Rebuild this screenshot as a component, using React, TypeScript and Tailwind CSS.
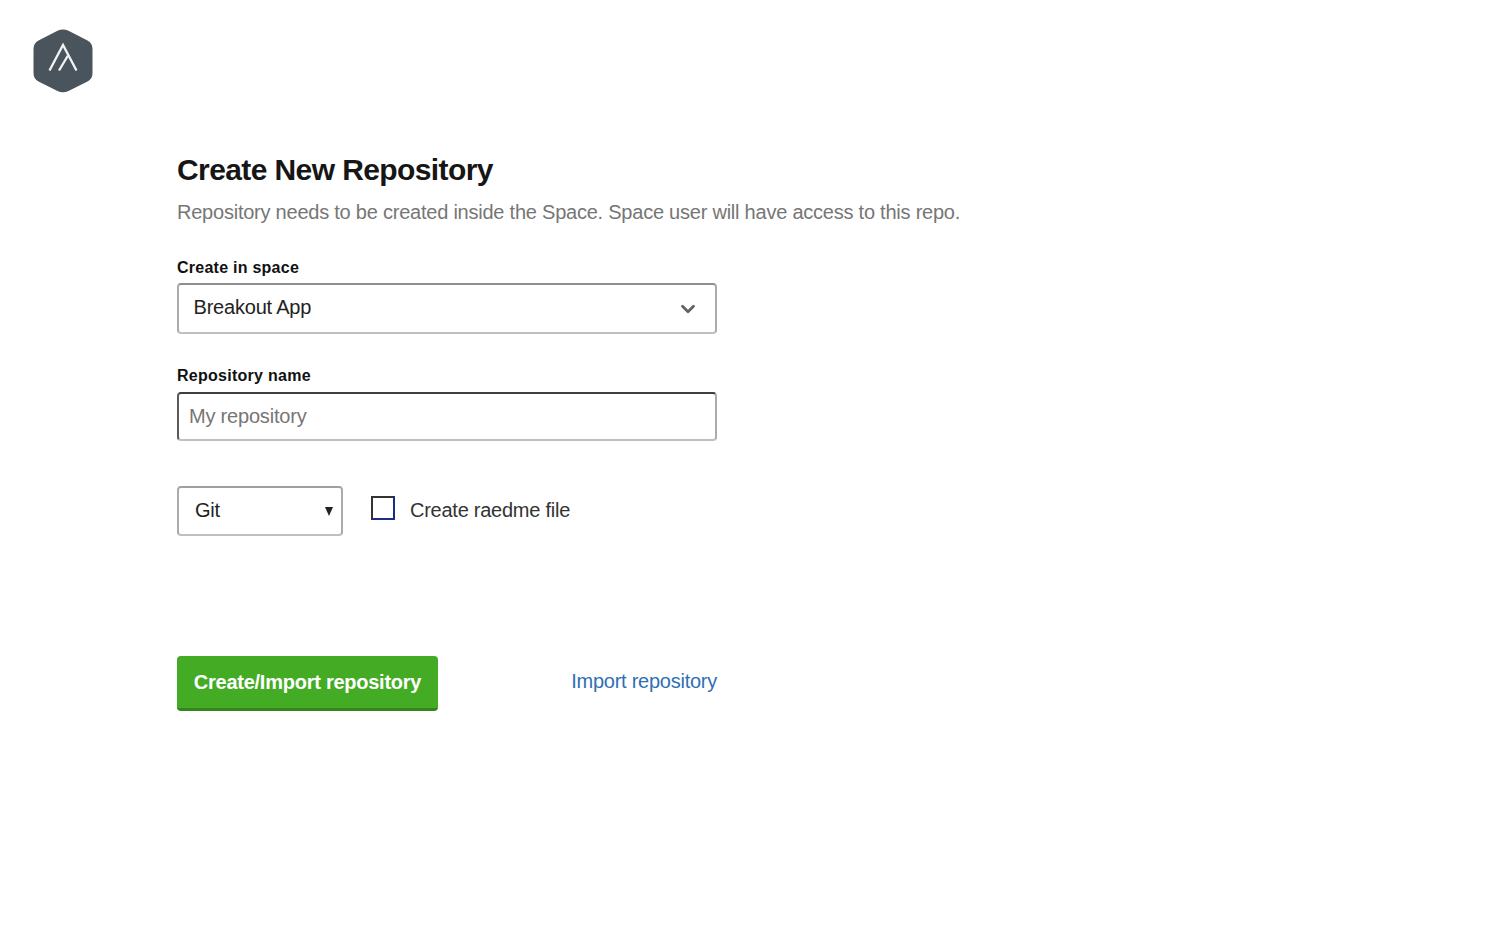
import React from "react";
import { ChevronDown } from "lucide-react";

const Logo = () => (
  <svg width="60" height="64" viewBox="0 0 60 64" fill="none">
    <path
      d="M24.500 1.800 Q30 -0.800 35.500 1.800 L54.500 11.500 Q59.500 14 59.500 20 L59.500 44 Q59.500 50 54.500 52.500 L35.500 62 Q30 64.600 24.500 62 L5.500 52.500 Q0.500 50 0.500 44 L0.500 20 Q0.500 14 5.500 11.500 Z"
      fill="#4a545d"
    />
    <path d="M16.500 41.500 L30 16 L43.500 41.500" stroke="#f1f3f4" strokeWidth="2.300" />
    <path d="M26 41.500 L35 26.500" stroke="#f1f3f4" strokeWidth="2.300" />
  </svg>
);

const App = () => {
  return (
    <div className="min-h-[929px] bg-white font-['Liberation_Sans',Arial,sans-serif] text-[#1a1a1a]">
      <header className="pl-[33px] pt-[29px]">
        <Logo />
      </header>

      <main className="pl-[177px] pt-[57px]">
        <h1 className="text-[30px] leading-[40px] font-bold tracking-[-0.6px] text-[#161616]">
          Create New Repository
        </h1>
        <p className="mt-[9px] text-[20px] leading-[26px] tracking-[-0.23px] text-[#767676]">
          Repository needs to be created inside the Space. Space user will have access to this repo.
        </p>

        <form className="w-[540px]">
          <label className="mt-[33px] block text-[16px] leading-[20px] font-bold tracking-[0.25px] text-[#111]">
            Create in space
          </label>
          <div className="mt-[5px] flex h-[51px] items-center justify-between rounded-[4px] border-2 border-t-[#8f8f8f] border-r-[#ababab] border-b-[#c0c0c0] border-l-[#ababab] pr-[16px] pl-[14.500px]">
            <span className="mb-[3px] text-[20px] tracking-[-0.2px] text-[#222]">Breakout App</span>
            <ChevronDown className="h-[22px] w-[22px] text-[#5f6368]" strokeWidth={3} />
          </div>

          <label className="mt-[32px] block text-[16px] leading-[20px] font-bold tracking-[0.27px] text-[#111]">
            Repository name
          </label>
          <input
            placeholder="My repository"
            className="mt-[6px] block h-[49px] w-full rounded-[4px] border-2 border-t-[#3e3e3e] border-r-[#ababab] border-b-[#c0c0c0] border-l-[#5a5a5a] px-[10px] text-[20px] tracking-[-0.2px] outline-none placeholder:text-[#767676]"
          />
        </form>

        <div className="mt-[45px] flex items-center">
          <div className="flex h-[50px] w-[166px] items-center justify-between rounded-[4px] border-2 border-t-[#a0a0a0] border-r-[#ababab] border-b-[#c0c0c0] border-l-[#ababab] pr-[8.500px] pl-[16px]">
            <span className="mb-[2px] text-[20px] tracking-[-0.2px] text-[#222]">Git</span>
            <span className="h-0 w-0 border-x-[4.500px] border-t-[9px] border-x-transparent border-t-[#222]" />
          </div>
          <label className="ml-[28px] flex items-center">
            <span className="mb-[6px] h-[24px] w-[24px] border-2 border-t-[#333] border-r-[#1c2a8c] border-b-[#1c2a8c] border-l-[#333] bg-white" />
            <span className="mb-[2px] ml-[15px] text-[20px] tracking-[-0.25px] text-[#333]">Create raedme file</span>
          </label>
        </div>

        <div className="mt-[120px] flex w-[540px] items-center justify-between">
          <button className="h-[55px] w-[261px] rounded-[4px] border-b-[3px] border-b-[#34851d] bg-[#43ac24] text-[20px] font-bold tracking-[-0.25px] text-white">
            Create/Import repository
          </button>
          <a className="mb-[5px] text-[20px] tracking-[-0.25px] text-[#2f6fb5]">Import repository</a>
        </div>
      </main>
    </div>
  );
};

export default App;
